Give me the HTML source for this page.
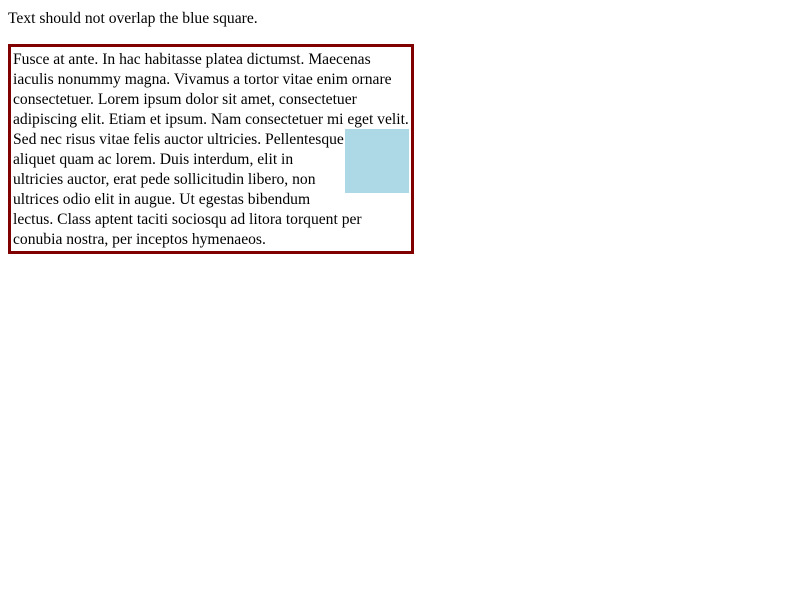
<!DOCTYPE html>
<html><head><meta charset="utf-8"><style>
body{margin:8px;font-family:"Liberation Serif",serif;font-size:15.6px;line-height:20px;color:#000;background:#fff}
p{margin:0 0 16px 0;position:relative;top:1px}
.box{width:396px;border:3px solid #800000;padding:2px;line-height:20px;white-space:nowrap}
.t{position:relative;top:1px}
.sq{float:right;width:64px;height:64px;background:#add8e6}
</style></head><body>
<p>Text should not overlap the blue square.</p>
<div class="box"><span class="t">Fusce at ante. In hac habitasse platea dictumst. Maecenas<br>iaculis nonummy magna. Vivamus a tortor vitae enim ornare<br>consectetuer. Lorem ipsum dolor sit amet, consectetuer<br>adipiscing elit. Etiam et ipsum. Nam consectetuer mi eget velit.<br></span><span class="sq"></span><span class="t">Sed nec risus vitae felis auctor ultricies. Pellentesque<br>aliquet quam ac lorem. Duis interdum, elit in<br>ultricies auctor, erat pede sollicitudin libero, non<br>ultrices odio elit in augue. Ut egestas bibendum<br>lectus. Class aptent taciti sociosqu ad litora torquent per<br>conubia nostra, per inceptos hymenaeos.</span></div>
</body></html>
